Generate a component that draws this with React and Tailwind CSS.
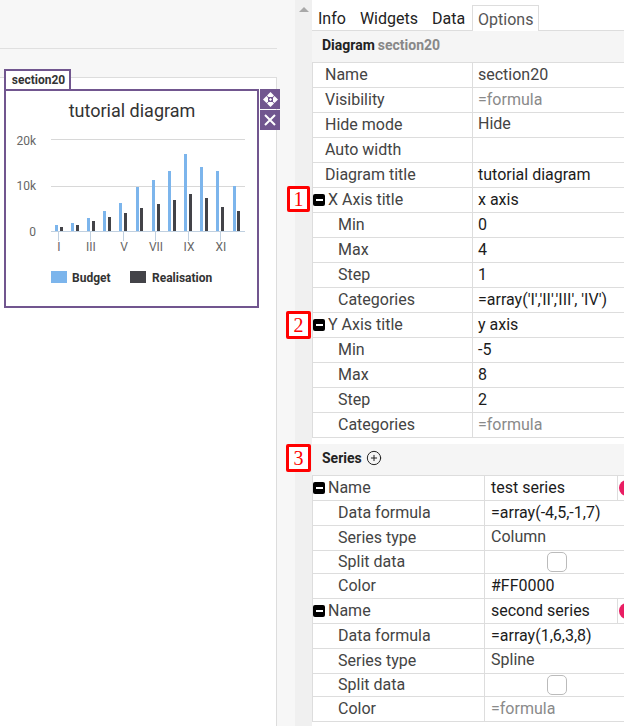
import React from "react";
import { CirclePlus } from "lucide-react";

const blue = [225, 223, 218, 211, 203, 187, 180, 171, 154, 167, 171, 186];
const blueX = [55, 71, 87, 103, 119, 136, 152, 168, 184, 200, 216, 233];
const dark = [227, 225, 221, 217, 213, 208, 204, 200, 194, 198, 207, 211];
const darkX = [60, 76, 92, 108, 124, 140, 157, 173, 189, 205, 221, 237];
const ticks = [
  [58, "I"], [90, "III"], [123, "V"], [155, "VII"], [188, "IX"], [220, "XI"],
];

function Chart() {
  return (
    <svg viewBox="6 91 251 215" className="block h-[215px] w-[251px]" style={{ fontFamily: "Roboto, sans-serif" }}>
      <text x="132" y="117" textAnchor="middle" fontSize="18" fill="#333">tutorial diagram</text>
      <line x1="51" x2="245" y1="139.5" y2="139.5" stroke="#d8d8d8" />
      <line x1="51" x2="245" y1="186.5" y2="186.5" stroke="#d8d8d8" />
      {blue.map((t, i) => <rect key={i} x={blueX[i]} y={t} width="3" height={231 - t} fill="#7cb5ec" />)}
      {dark.map((t, i) => <rect key={i} x={darkX[i]} y={t} width="3" height={231 - t} fill="#434348" />)}
      <line x1="51" x2="245" y1="231.5" y2="231.5" stroke="#c0d0e0" />
      {ticks.map(([x, l]) => (
        <g key={l}>
          <line x1={x + 0.5} x2={x + 0.5} y1="232" y2="241" stroke="#c0d0e0" />
          <text x={x + 1} y="251" textAnchor="middle" fontSize="12" fill="#666">{l}</text>
        </g>
      ))}
      <text x="36" y="145" textAnchor="end" fontSize="12" fill="#666">20k</text>
      <text x="36" y="190" textAnchor="end" fontSize="12" fill="#666">10k</text>
      <text x="36" y="236" textAnchor="end" fontSize="12" fill="#666">0</text>
      <rect x="51" y="271" width="16" height="12" fill="#7cb5ec" />
      <text x="72" y="282" fontSize="12" fontWeight="700" fill="#333">Budget</text>
      <rect x="130" y="271" width="16" height="12" fill="#434348" />
      <text x="152" y="282" fontSize="12" fontWeight="700" fill="#333">Realisation</text>
    </svg>
  );
}

function MoveIcon() {
  return (
    <svg width="15" height="15" viewBox="0 0 15 15" fill="#fff">
      <path d="M7.5 0 11 3.5 9.5 5 5.5 5 4 3.5Z" />
      <path d="M7.5 15 11 11.5 9.5 10 5.5 10 4 11.5Z" />
      <path d="M0 7.5 3.5 4 5 5.5 5 9.5 3.5 11Z" />
      <path d="M15 7.5 11.5 4 10 5.5 10 9.5 11.5 11Z" />
      <path d="M7.5 6 9 7.5 7.5 9 6 7.5Z" />
    </svg>
  );
}

function CloseIcon() {
  return (
    <svg width="12" height="12" viewBox="0 0 12 12" stroke="#fff" strokeWidth="2">
      <path d="M1 1 11 11M11 1 1 11" />
    </svg>
  );
}

function Minus() {
  return (
    <span className="flex h-[12px] w-[12px] shrink-0 items-center justify-center rounded-[2px] bg-black">
      <span className="h-[2px] w-[7px] bg-white" />
    </span>
  );
}

function Row({ label, value, tone = "dark", level = 1, toggle, col = "first", check, extra, short, bump }) {
  const toneClass = tone === "mute" ? "text-[#8a8a8a]" : tone === "mid" ? "text-[#444]" : "text-[#1c1c1c]";
  const colClass = col === "first" ? "w-[159px]" : "w-[171px]";
  const padClass = toggle ? "pl-0" : level === 0 ? "pl-[12px]" : "pl-[25px]";
  return (
    <div className={`flex border-b border-[#ddd] ${short ? "h-[23px]" : "h-[25px]"}`}>
      <div className={`${colClass} ${padClass} flex shrink-0 items-center gap-[3px] text-[#444]`}>
        {toggle && <Minus />}
        <span>{label}</span>
      </div>
      <div className={`flex min-w-0 flex-1 items-center border-l border-[#ddd] ${col === "first" ? "pl-[5px]" : "pl-[6px]"} ${toneClass}`}>
        {check ? (
          <span className="ml-[56px] block h-[20px] w-[20px] rounded-[5px] border border-[#bbb] bg-white" />
        ) : (
          <span className={bump ? "-mt-[2px]" : ""}>{value}</span>
        )}
      </div>
      {extra && (
        <div className="flex w-[7px] shrink-0 items-center overflow-hidden border-l border-[#ddd] pl-px">
          <span className="block h-[16px] w-[16px] shrink-0 rounded-full bg-[#e91e63]" />
        </div>
      )}
    </div>
  );
}

function Badge({ n, className }) {
  return (
    <div className={`absolute flex items-center justify-center rounded-[2px] border-[3px] border-[#ff0000] bg-white text-[#ff0000] ${className}`} style={{ fontFamily: '"Liberation Serif", serif', fontSize: 20, lineHeight: 1 }}>
      {n}
    </div>
  );
}

export default function App() {
  return (
    <div className="relative flex h-[726px] w-[624px] overflow-hidden bg-[#f7f7f7] text-[16px] leading-[20px]" style={{ fontFamily: "Roboto, sans-serif" }}>
      {/* Left canvas */}
      <div className="flex w-[277px] shrink-0 flex-col">
        <div className="h-[49px] shrink-0 border-b border-[#e0e0e0]" />
        <div className="mt-[28px] flex-1 border-t border-r border-[#ddd] bg-white">
          <div className="-mt-[9px] ml-[4px] flex h-[20px] w-[67px] items-start justify-center border-2 border-b-0 border-[#71568f] bg-white pl-[2px] text-[12px] leading-[18px] font-bold text-[#333]">
            section20
          </div>
          <div className="ml-[4px] flex items-start">
            <div className="h-[219px] w-[255px] border-2 border-[#71568f] bg-white">
              <Chart />
            </div>
            <div className="-mr-[4px] ml-px flex flex-col gap-px">
              <div className="flex h-[20px] w-[20px] items-center justify-center bg-[#71568f]"><MoveIcon /></div>
              <div className="flex h-[20px] w-[20px] items-center justify-center bg-[#71568f]"><CloseIcon /></div>
            </div>
          </div>
        </div>
      </div>

      {/* Gutter and scrollbar */}
      <div className="w-[18px] shrink-0" />
      <div className="flex w-[17px] shrink-0 justify-center bg-[#f0f0f0] pt-[7px]">
        <span className="h-0 w-0 border-x-[5px] border-b-[5px] border-x-transparent border-b-[#a8a8a8]" />
      </div>

      {/* Properties panel */}
      <div className="min-w-0 flex-1 bg-white">
        <div className="flex h-[31px] items-end border-b border-[#ddd] pl-[6px] text-[#222]">
          <span className="h-[25px] pt-[4px]">Info</span>
          <span className="ml-[14px] h-[25px] pt-[4px]">Widgets</span>
          <span className="ml-[14px] h-[25px] pt-[4px]">Data</span>
          <span className="-mb-px ml-[7px] h-[26px] border border-b-0 border-[#ddd] bg-white px-[5px] pt-[4px] text-[#555]">Options</span>
        </div>
        <div className="flex h-[32px] items-center border-b border-[#ddd] bg-[#f5f5f5] pb-[3px] pl-[10px] text-[14px] font-bold text-[#222]">
          Diagram<span className="ml-[3px] text-[#888]">section20</span>
        </div>
        <div className="border-l border-[#ddd]">
          <Row level={0} label="Name" value="section20" tone="mid" />
          <Row level={0} label="Visibility" value="=formula" tone="mute" />
          <Row level={0} label="Hide mode" value="Hide" tone="mid" bump />
          <Row level={0} label="Auto width" value="" />
          <Row level={0} label="Diagram title" value="tutorial diagram" />
          <Row toggle label="X Axis title" value="x axis" />
          <Row label="Min" value="0" />
          <Row label="Max" value="4" />
          <Row label="Step" value="1" />
          <Row label="Categories" value="=array('I','II','III', 'IV')" />
          <Row toggle label="Y Axis title" value="y axis" />
          <Row label="Min" value="-5" />
          <Row label="Max" value="8" />
          <Row label="Step" value="2" />
          <Row label="Categories" value="=formula" tone="mute" />
        </div>
        <div className="mt-[6px] flex h-[32px] items-center gap-[4px] border-b border-[#ddd] bg-[#f5f5f5] pb-[3px] pl-[10px] text-[14px] font-bold text-[#222]">
          Series
          <CirclePlus size={16} strokeWidth={1.5} className="text-[#222]" />
        </div>
        <div className="border-l border-[#ddd]">
          <Row col="second" toggle label="Name" value="test series" extra tone="dark" />
          <Row col="second" label="Data formula" value="=array(-4,5,-1,7)" />
          <Row col="second" label="Series type" value="Column" tone="mid" bump />
          <Row col="second" short label="Split data" check />
          <Row col="second" label="Color" value="#FF0000" />
          <Row col="second" toggle label="Name" value="second series" extra />
          <Row col="second" label="Data formula" value="=array(1,6,3,8)" />
          <Row col="second" label="Series type" value="Spline" tone="mid" bump />
          <Row col="second" short label="Split data" check />
          <Row col="second" label="Color" value="=formula" tone="mute" />
        </div>
      </div>

      <Badge n="1" className="left-[287px] top-[186px] h-[26px] w-[23px]" />
      <Badge n="2" className="left-[286px] top-[311px] h-[28px] w-[25px]" />
      <Badge n="3" className="left-[286px] top-[444px] h-[28px] w-[25px]" />
    </div>
  );
}
